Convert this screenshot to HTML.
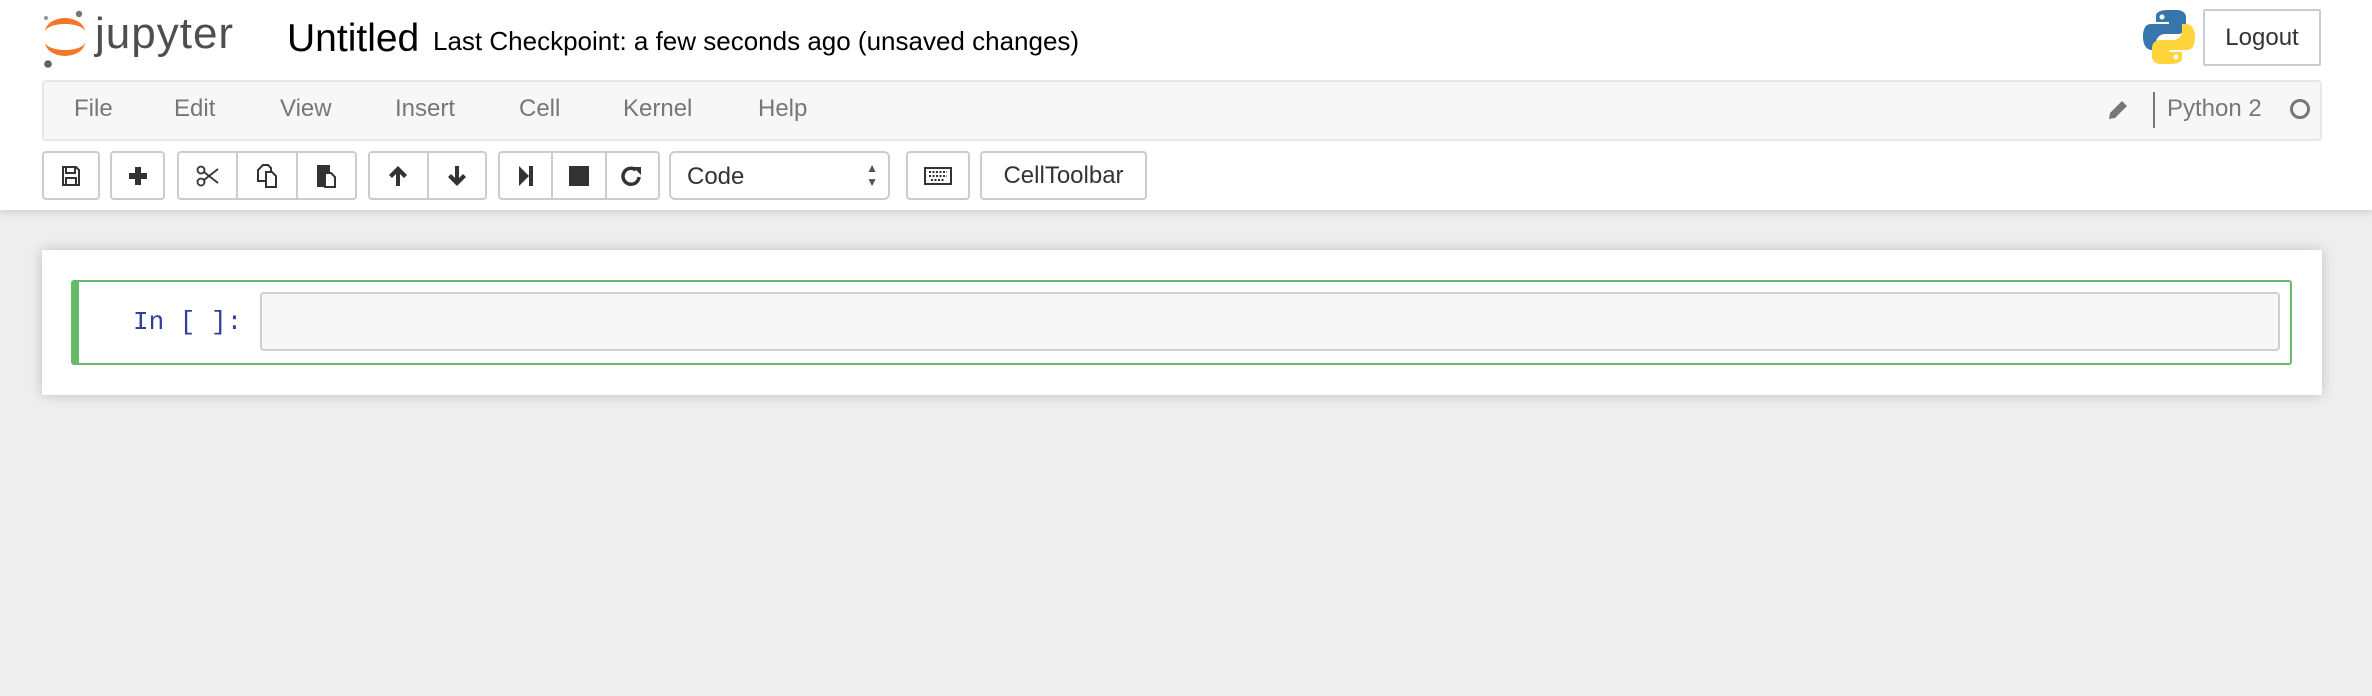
<!DOCTYPE html>
<html><head><meta charset="utf-8"><style>
*{box-sizing:border-box;margin:0;padding:0}
body{width:2372px;height:696px;background:#eee;font-family:"Liberation Sans",Arial,sans-serif;position:relative;overflow:hidden}
.abs{position:absolute}
#hdr{left:0;top:0;width:2372px;height:210px;background:#fff;box-shadow:0 2px 8px rgba(0,0,0,.15)}
.menu{left:42px;top:80px;width:2280px;height:61px;background:#f7f7f7;border:2px solid #e7e7e7;border-radius:4px}
.mi{top:95px;font-size:24px;color:#777}
.btn{top:151px;height:49px;background:#fff;border:2px solid #ccc;border-radius:4px;display:flex}
.btn>div{flex:1;display:flex;align-items:center;justify-content:center;border-left:2px solid #ccc}
.btn>div:first-child{border-left:none}
</style></head><body>
<div id="hdr" class="abs"></div>
<!-- logo -->
<svg class="abs" style="left:40px;top:8px" width="50" height="64" viewBox="0 0 50 64">
<path d="M5 24 A20 14 0 0 1 45 24 A20 8 0 0 0 5 24Z" fill="#F37726"/>
<path d="M5 34 A20 14 0 0 0 45 34 A20 8 0 0 1 5 34Z" fill="#F37726"/>
<circle cx="39" cy="6" r="3.2" fill="#767677"/><circle cx="6" cy="10" r="2" fill="#989798"/><circle cx="8" cy="56" r="3.8" fill="#616262"/>
</svg>
<div class="abs" style="left:95px;top:9px;font-size:44px;color:#4e4e4e;letter-spacing:1px">jupyter</div>
<div class="abs" style="left:287px;top:17px;font-size:39px;color:#000">Untitled</div>
<div class="abs" style="left:433px;top:26px;font-size:26px;color:#000">Last Checkpoint: a few seconds ago (unsaved changes)</div>
<!-- python logo -->
<svg class="abs" style="left:2141px;top:8px" width="56" height="58" viewBox="0 0 56 58">
<path d="M27 2C14 2 15 8 15 8v6h13v2H10C4 16 2 22 2 29s3 13 9 13h4v-7c0-5 4-9 9-9h13c4 0 8-3 8-8V9c0-4-4-7-9-7z" fill="#3776ab"/>
<path d="M29 56c13 0 12-6 12-6v-6H28v-2h18c6 0 8-6 8-13s-3-13-9-13h-4v7c0 5-4 9-9 9H19c-4 0-8 3-8 8v9c0 4 4 7 9 7z" fill="#ffd43b"/>
<circle cx="21" cy="9" r="2.5" fill="#fff"/><circle cx="35" cy="49" r="2.5" fill="#fff"/>
</svg>
<div class="abs" style="left:2203px;top:9px;width:118px;height:57px;border:2px solid #ccc;border-radius:2px;font-size:24px;color:#333;text-align:center;line-height:53px">Logout</div>
<div class="abs menu"></div>
<div class="abs mi" style="left:74px">File</div>
<div class="abs mi" style="left:174px">Edit</div>
<div class="abs mi" style="left:280px">View</div>
<div class="abs mi" style="left:395px">Insert</div>
<div class="abs mi" style="left:519px">Cell</div>
<div class="abs mi" style="left:623px">Kernel</div>
<div class="abs mi" style="left:758px">Help</div>
<svg class="abs" style="left:2106px;top:98px" width="24" height="24" viewBox="0 0 24 24"><path d="M3 21l1-6L16 3l5 5L9 20z" fill="#777"/></svg>
<div class="abs" style="left:2153px;top:92px;width:2px;height:36px;background:#777"></div>
<div class="abs" style="left:2167px;top:95px;font-size:24px;color:#777">Python 2</div>
<div class="abs" style="left:2290px;top:99px;width:20px;height:20px;border:3px solid #777;border-radius:50%"></div>
<!-- toolbar -->
<div class="abs btn" style="left:42px;width:58px"><div><svg width="20" height="22" viewBox="0 0 20 22"><path d="M2 2h13l3 3v15H2z M5 2v6h9V2 M5 13h10v7H5z" fill="none" stroke="#333" stroke-width="2"/></svg></div></div>
<div class="abs btn" style="left:110px;width:55px"><div><svg width="18" height="18"><path d="M6 0h6v6h6v6h-6v6H6v-6H0V6h6z" fill="#333"/></svg></div></div>
<div class="abs btn" style="left:177px;width:180px"><div><svg width="24" height="22" viewBox="0 0 24 22"><circle cx="5" cy="5" r="3.5" fill="none" stroke="#333" stroke-width="1.8"/><circle cx="5" cy="17" r="3.5" fill="none" stroke="#333" stroke-width="1.8"/><path d="M8 7L22 18M8 15L22 4" stroke="#333" stroke-width="1.8"/></svg></div><div><svg width="22" height="26" viewBox="0 0 22 26"><path d="M7 2h5l3 3v4H10v9H2V7z M10 9h6l4 4v11H10z" fill="none" stroke="#333" stroke-width="2"/></svg></div><div><svg width="22" height="26" viewBox="0 0 22 26"><path d="M2 2h13v7H9v15H2z" fill="#333"/><path d="M10 10h6l4 4v10H10z" fill="none" stroke="#333" stroke-width="2"/></svg></div></div>
<div class="abs btn" style="left:368px;width:119px"><div><svg width="20" height="22" viewBox="0 0 20 22"><path d="M10 1L19 10l-3 3-4-4v12H8V9l-4 4-3-3z" fill="#333"/></svg></div><div><svg width="20" height="22" viewBox="0 0 20 22"><path d="M10 21L19 12l-3-3-4 4V1H8v12L4 9l-3 3z" fill="#333"/></svg></div></div>
<div class="abs btn" style="left:498px;width:162px"><div><svg width="16" height="22"><path d="M1 1l10 10L1 21z M11 1h4v20h-4z" fill="#333"/></svg></div><div><svg width="20" height="20"><rect width="20" height="20" fill="#333"/></svg></div><div><svg width="22" height="22" viewBox="0 0 22 22"><path d="M18 12a8 8 0 1 1-3-7" fill="none" stroke="#333" stroke-width="3.5"/><path d="M12 2h8v8z" fill="#333"/></svg></div></div>
<div class="abs" style="left:669px;top:151px;width:221px;height:49px;border:2px solid #ccc;border-radius:6px;background:#fff;font-size:24px;color:#333;padding:10px 0 0 16px">Code<span style="position:absolute;right:10px;top:8px;font-size:12px;line-height:14px;color:#555">▲<br>▼</span></div>
<div class="abs btn" style="left:906px;width:64px"><div><svg width="28" height="18" viewBox="0 0 28 18"><rect x="1" y="1" width="26" height="16" fill="none" stroke="#333" stroke-width="2"/><path d="M5 5h18M5 9h18M7 13h14" stroke="#333" stroke-width="2" stroke-dasharray="2 1.5"/></svg></div></div>
<div class="abs btn" style="left:980px;width:167px;font-size:24px;color:#333"><div>CellToolbar</div></div>
<!-- notebook -->
<div class="abs" style="left:42px;top:250px;width:2280px;height:145px;background:#fff;box-shadow:0 0 12px rgba(0,0,0,.2)"></div>
<div class="abs" style="left:71px;top:280px;width:2221px;height:85px;border:2px solid #66bb6a;border-left:8px solid #66bb6a;border-radius:3px"></div>
<div class="abs" style="left:133px;top:307px;font-family:'Liberation Mono',monospace;font-size:26px;color:#303f9f">In [ ]:</div>
<div class="abs" style="left:260px;top:292px;width:2020px;height:59px;background:#f7f7f7;border:2px solid #cfcfcf;border-radius:4px"></div>
</body></html>
